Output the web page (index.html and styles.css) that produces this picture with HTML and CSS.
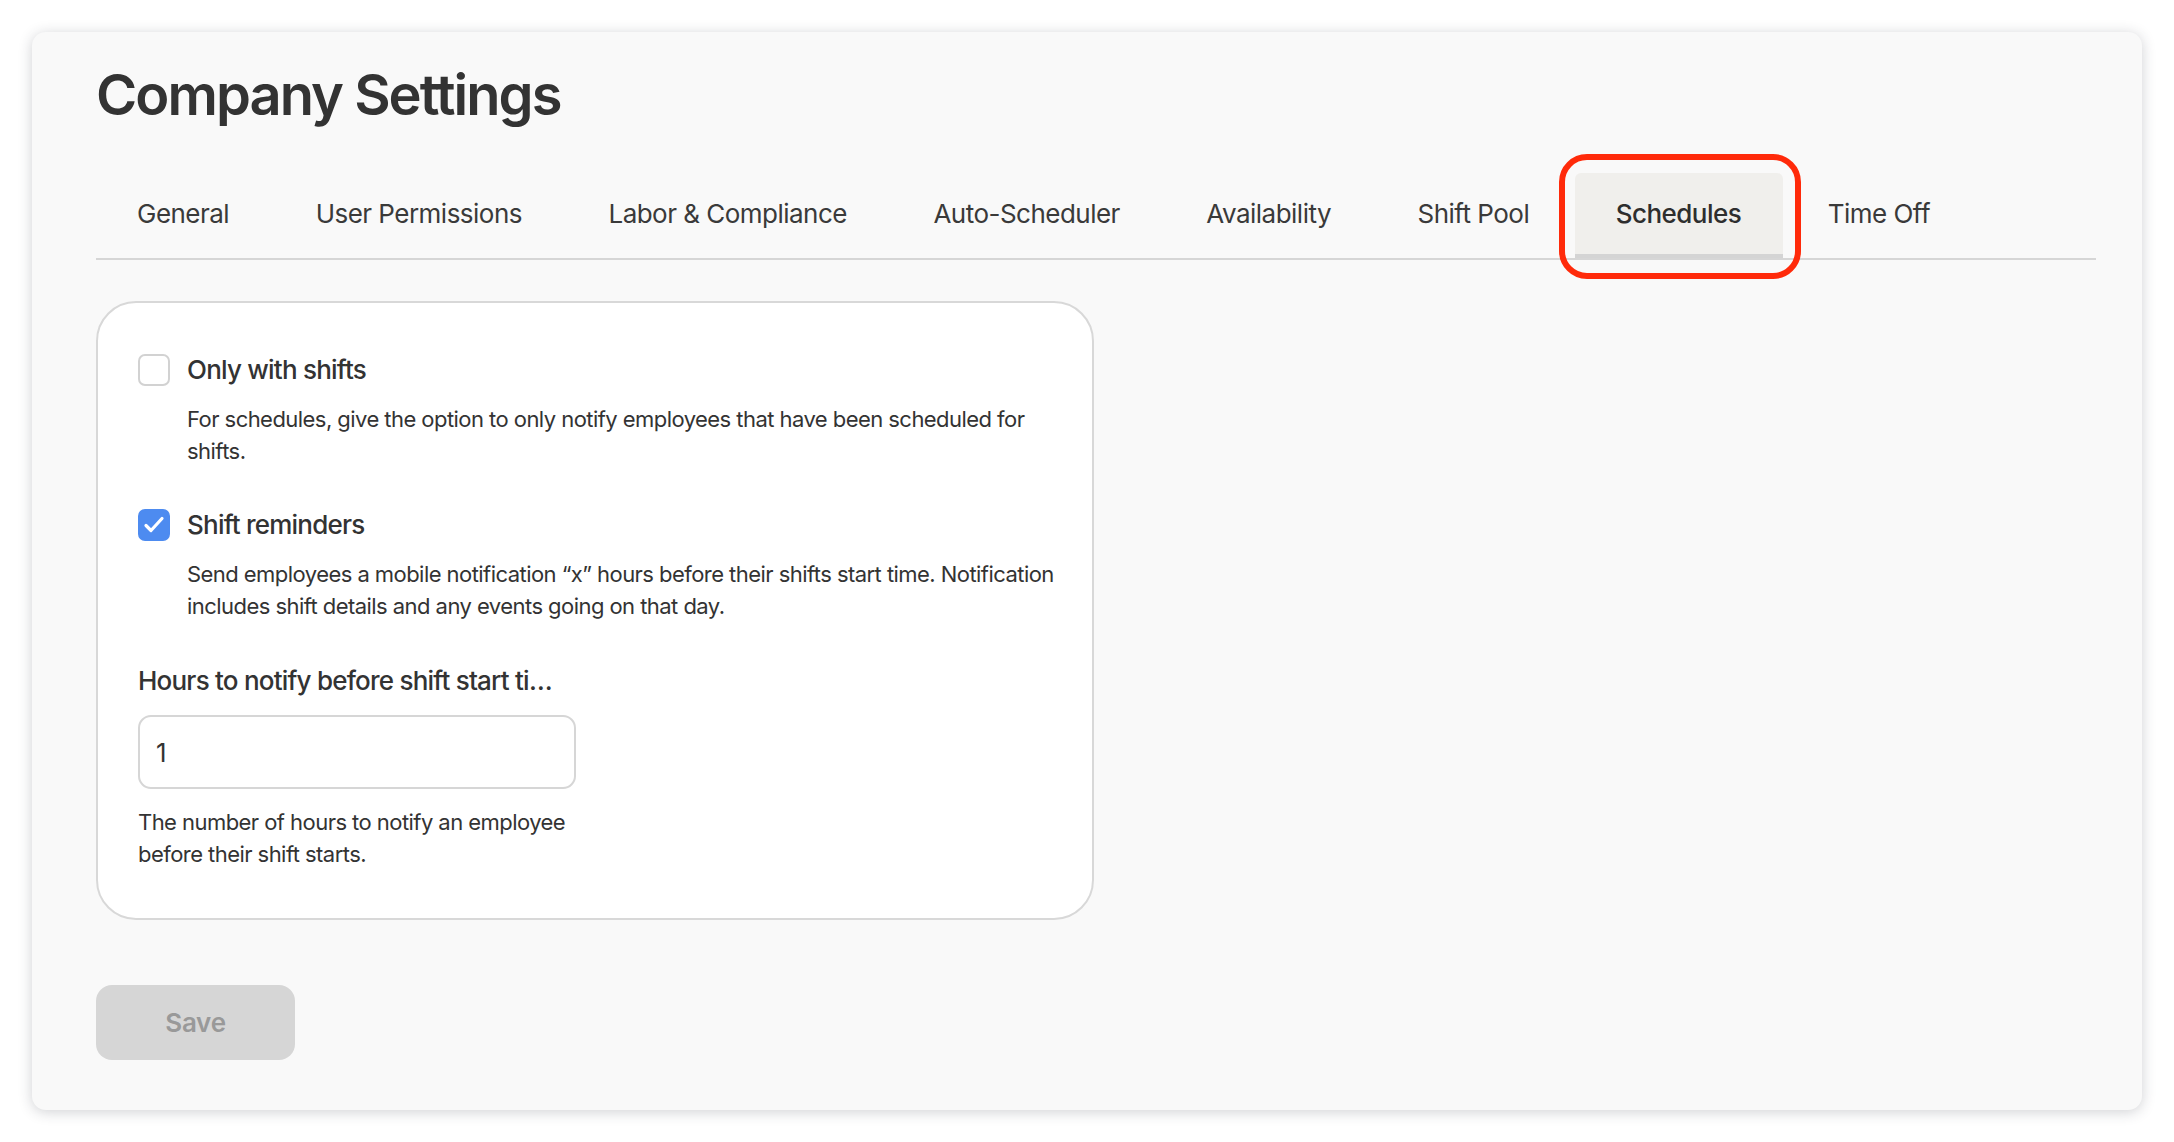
FILE: index.html
```html
<!DOCTYPE html>
<html lang="en">
<head>
  <meta charset="UTF-8" />
  <title>Company Settings</title>
  <link rel="stylesheet" href="styles.css">
</head>
<body>
  <div class="panel">
    <h1 class="title">Company Settings</h1>

    <nav class="tabs">
      <div class="tab">General</div>
      <div class="tab">User Permissions</div>
      <div class="tab">Labor &amp; Compliance</div>
      <div class="tab">Auto-Scheduler</div>
      <div class="tab">Availability</div>
      <div class="tab">Shift Pool</div>
      <div class="tab active">Schedules<span class="highlight"></span></div>
      <div class="tab">Time Off</div>
    </nav>

    <div class="card">
      <div class="option">
        <span class="checkbox"></span>
        <div class="option-label">Only with shifts</div>
        <p class="option-desc">For schedules, give the option to only notify employees that have been scheduled for shifts.</p>
      </div>

      <div class="option">
        <span class="checkbox checked">
          <svg width="26" height="26" viewBox="0 0 26 26"><path d="M5 13.5l5 5 11-12" fill="none" stroke="#fff" stroke-width="3.2" stroke-linecap="round" stroke-linejoin="round"/></svg>
        </span>
        <div class="option-label">Shift reminders</div>
        <p class="option-desc">Send employees a mobile notification “x” hours before their shifts start time. Notification includes shift details and any events going on that day.</p>
      </div>

      <div class="field">
        <div class="field-label">Hours to notify before shift start time</div>
        <input class="field-input" type="text" value="1">
        <p class="field-help">The number of hours to notify an employee before their shift starts.</p>
      </div>
    </div>

    <button class="save">Save</button>
  </div>
</body>
</html>
```

FILE: styles.css
```css
body {
  margin: 0;
  padding: 32px;
  background: #ffffff;
  font-family: Inter, "Noto Sans", sans-serif;
  color: #333333;
}

/* Основная панель */
.panel {
  background: #f9f9f9;
  border-radius: 14px;
  box-shadow: 0 2px 14px rgba(40, 45, 60, 0.22);
  padding: 31px 46px 50px 64px;
}

.title {
  margin: 0;
  font-size: 56px;
  line-height: 65px;
  font-weight: 600;
  letter-spacing: -0.035em;
  color: #333333;
}

/* Вкладки */
.tabs {
  display: flex;
  gap: 3.5px;
  margin-top: 45px;
  border-bottom: 2px solid #d6d6d6;
}

.tab {
  position: relative;
  display: flex;
  align-items: center;
  height: 81px;
  padding: 0 42px 0 41px;
  font-size: 26px;
  letter-spacing: -0.02em;
  color: #3a3a3a;
  border-bottom: 4px solid transparent;
}

.tab.active {
  background: #f0efec;
  border-bottom-color: #d4d4d4;
  border-radius: 6px 6px 0 0;
  font-weight: 500;
  color: #2e2e2e;
}

/* Красная рамка-выделение */
.highlight {
  position: absolute;
  top: -19px;
  right: -18px;
  bottom: -25px;
  left: -16px;
  border: 6px solid #ff2a0a;
  border-radius: 28px;
  pointer-events: none;
}

/* Карточка с настройками */
.card {
  width: 998px;
  box-sizing: border-box;
  margin-top: 41px;
  padding: 51px 28px 48px 40px;
  background: #ffffff;
  border: 2px solid #d8d8d8;
  border-radius: 40px;
}

.option {
  display: grid;
  grid-template-columns: 32px 1fr;
  column-gap: 17px;
  margin-bottom: 42px;
}

.checkbox {
  display: flex;
  align-items: center;
  justify-content: center;
  width: 32px;
  height: 32px;
  box-sizing: border-box;
  border: 2px solid #d2d2d2;
  border-radius: 7px;
  background: #fff;
}

.checkbox.checked {
  background: #4d8bf0;
  border-color: #4d8bf0;
}

.option-label {
  font-size: 26px;
  line-height: 32px;
  font-weight: 500;
  letter-spacing: -0.03em;
}

.option-desc {
  grid-column: 2;
  margin: 17px 0 0;
  font-size: 22px;
  line-height: 32px;
  letter-spacing: -0.025em;
}

.field-label {
  width: 426px;
  font-size: 26px;
  line-height: 34px;
  font-weight: 500;
  letter-spacing: -0.03em;
  white-space: nowrap;
  overflow: hidden;
  text-overflow: ellipsis;
}

.field-input {
  display: block;
  width: 438px;
  height: 74px;
  box-sizing: border-box;
  margin-top: 17px;
  padding: 0 16px;
  border: 2px solid #d6d6d6;
  border-radius: 13px;
  background: #fff;
  font-family: inherit;
  font-size: 26px;
  color: #333;
}

.field-help {
  width: 438px;
  margin: 17px 0 0;
  font-size: 22px;
  line-height: 32px;
  letter-spacing: -0.025em;
}

/* Кнопка сохранения */
.save {
  display: block;
  margin-top: 65px;
  width: 199px;
  height: 75px;
  border: none;
  border-radius: 16px;
  background: #d6d6d6;
  color: #999999;
  font-family: inherit;
  font-size: 26px;
  font-weight: 600;
  letter-spacing: -0.01em;
}
```
